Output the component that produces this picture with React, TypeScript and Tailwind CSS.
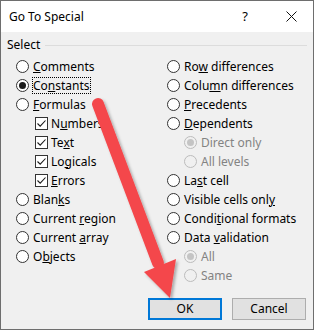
import React from 'react';

type Opt = {
  pre: string;
  key: string;
  post: string;
  kind: 'radio' | 'check';
  level?: number;
  checked?: boolean;
  disabled?: boolean;
  focus?: boolean;
};

const left: Opt[] = [
  { pre: '', key: 'C', post: 'omments', kind: 'radio' },
  { pre: 'Co', key: 'n', post: 'stants', kind: 'radio', checked: true, focus: true },
  { pre: '', key: 'F', post: 'ormulas', kind: 'radio' },
  { pre: 'N', key: 'u', post: 'mbers', kind: 'check', level: 1, checked: true },
  { pre: 'Te', key: 'x', post: 't', kind: 'check', level: 1, checked: true },
  { pre: 'Lo', key: 'g', post: 'icals', kind: 'check', level: 1, checked: true },
  { pre: '', key: 'E', post: 'rrors', kind: 'check', level: 1, checked: true },
  { pre: 'Blan', key: 'k', post: 's', kind: 'radio' },
  { pre: 'Current ', key: 'r', post: 'egion', kind: 'radio' },
  { pre: 'Current ', key: 'a', post: 'rray', kind: 'radio' },
  { pre: 'O', key: 'b', post: 'jects', kind: 'radio' },
];

const right: Opt[] = [
  { pre: 'Ro', key: 'w', post: ' differences', kind: 'radio' },
  { pre: 'Colu', key: 'm', post: 'n differences', kind: 'radio' },
  { pre: '', key: 'P', post: 'recedents', kind: 'radio' },
  { pre: '', key: 'D', post: 'ependents', kind: 'radio' },
  { pre: 'Direct only', key: '', post: '', kind: 'radio', level: 1, checked: true, disabled: true },
  { pre: 'All levels', key: '', post: '', kind: 'radio', level: 1, disabled: true },
  { pre: 'La', key: 's', post: 't cell', kind: 'radio' },
  { pre: 'Visible cells onl', key: 'y', post: '', kind: 'radio' },
  { pre: 'Condi', key: 't', post: 'ional formats', kind: 'radio' },
  { pre: 'Data ', key: 'v', post: 'alidation', kind: 'radio' },
  { pre: 'All', key: '', post: '', kind: 'radio', level: 1, checked: true, disabled: true },
  { pre: 'Same', key: '', post: '', kind: 'radio', level: 1, disabled: true },
];

function Radio({ checked, disabled }: { checked?: boolean; disabled?: boolean }) {
  return (
    <span
      className={`flex h-[13px] w-[13px] shrink-0 items-center justify-center rounded-full border ${
        disabled ? 'border-[#bcbcbc] bg-[#f0f0f0]' : 'border-[#333333] bg-white'
      }`}
    >
      {checked && (
        <span className={`h-[7px] w-[7px] rounded-full ${disabled ? 'bg-[#c4c4c4]' : 'bg-[#1a1a1a]'}`} />
      )}
    </span>
  );
}

function Check() {
  return (
    <span className="flex h-[13px] w-[13px] shrink-0 items-center justify-center border border-[#333333] bg-white">
      <svg width="11" height="11" viewBox="0 0 11 11">
        <path d="M1.5 5.5 L4.2 8.2 L9.5 2.5" fill="none" stroke="#1a1a1a" strokeWidth="1.1" />
      </svg>
    </span>
  );
}

function Row({ o }: { o: Opt }) {
  const label = (
    <span className={o.disabled ? 'text-[#838383]' : 'text-black'}>
      {o.pre}
      {o.key && <u className="underline-offset-[1px]">{o.key}</u>}
      {o.post}
    </span>
  );
  return (
    <div className={`flex h-[19px] items-center ${o.level ? (o.kind === 'check' ? 'pl-[19px]' : 'pl-[17px]') : ''}`}>
      {o.kind === 'radio' ? <Radio checked={o.checked} disabled={o.disabled} /> : <Check />}
      {o.focus ? (
        <span className="ml-[3px] border border-dotted border-black leading-[15px]">{label}</span>
      ) : (
        <span className={o.kind === 'check' ? 'ml-[3px]' : 'ml-[4px]'}>{label}</span>
      )}
    </div>
  );
}

export default function App() {
  return (
    <div
      className="relative h-[330px] w-[314px] overflow-hidden border border-[#6e6e6e] bg-[#f0f0f0] text-[12px] text-black"
      style={{ fontFamily: '"Segoe UI", "Noto Sans", sans-serif' }}
    >
      {/* Title bar */}
      <div className="flex h-[31px] items-center bg-white pl-[8px]">
        <span className="text-[12px]">Go To Special</span>
        <span className="ml-auto mr-[38px] text-[13px]">?</span>
        <svg width="11" height="11" viewBox="0 0 11 11" className="mr-[16px]">
          <path d="M0.5 0.5 L10.5 10.5 M10.5 0.5 L0.5 10.5" stroke="#111" strokeWidth="1" />
        </svg>
      </div>

      {/* Select group */}
      <div className="mt-[6px] flex h-[14px] items-center pl-[6px] pr-[6px]">
        <span>Select</span>
        <span className="ml-[5px] h-px flex-1 bg-[#dcdcdc]" />
      </div>

      <div className="mt-[5px] grid grid-cols-[151px_1fr] pl-[15px]">
        <div className="flex flex-col">
          {left.map((o, i) => (
            <Row key={i} o={o} />
          ))}
        </div>
        <div className="flex flex-col">
          {right.map((o, i) => (
            <Row key={i} o={o} />
          ))}
        </div>
      </div>

      {/* Buttons */}
      <div className="mt-[13px] flex justify-end gap-[10px] pr-[7px]">
        <button className="h-[22px] w-[74px] border-2 border-[#0078d7] bg-[#e1e1e1] text-[12px]">OK</button>
        <button className="h-[22px] w-[74px] border border-[#adadad] bg-[#e1e1e1] text-[12px]">Cancel</button>
      </div>

      {/* Red arrow annotation */}
      <svg className="pointer-events-none absolute left-0 top-0" width="314" height="330" viewBox="0 0 314 330">
        <defs>
          <filter id="sh" x="-20%" y="-20%" width="140%" height="140%">
            <feDropShadow dx="2" dy="2" stdDeviation="1.5" floodColor="#000" floodOpacity="0.3" />
          </filter>
        </defs>
        <g filter="url(#sh)">
          <line x1="97" y1="103" x2="157" y2="262" stroke="#f4474b" strokeWidth="12" strokeLinecap="round" />
          <polygon points="143,271 175,258 169,297" fill="#f4474b" />
        </g>
      </svg>
    </div>
  );
}
